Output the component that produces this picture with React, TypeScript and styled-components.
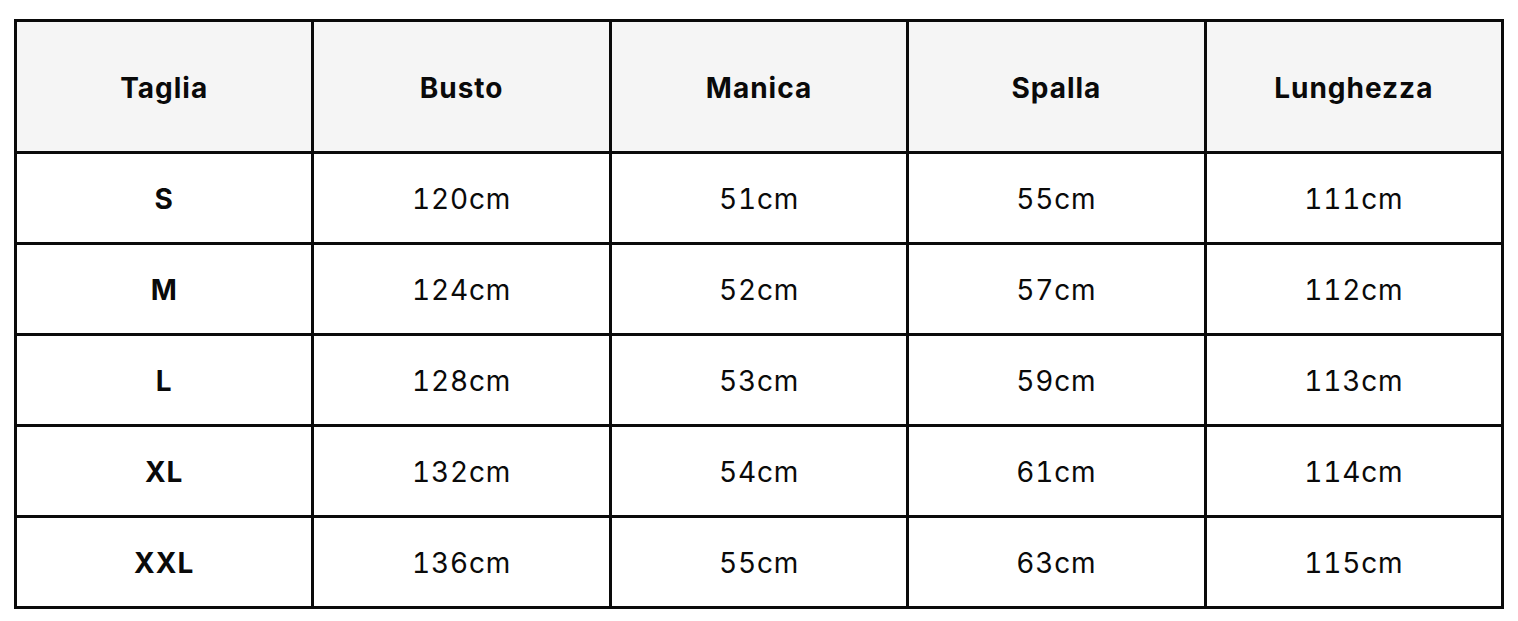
import React from "react";
import styled, { createGlobalStyle } from "styled-components";

const GlobalStyle = createGlobalStyle`
  html, body {
    margin: 0;
    padding: 0;
    background: #ffffff;
  }
  body {
    font-family: Inter, "Open Sans", "Liberation Sans", sans-serif;
  }
`;

const Page = styled.div`
  padding: 19px 15px 0 14px;
`;

const Grid = styled.div`
  width: 1490px;
  display: grid;
  grid-template-columns: repeat(5, 1fr);
  grid-template-rows: 129px repeat(5, 88px);
  gap: 3px;
  padding: 3px;
  box-sizing: border-box;
  background: #0a0a0a;
`;

const Cell = styled.div<{ $head?: boolean; $bold?: boolean }>`
  display: flex;
  align-items: center;
  justify-content: center;
  padding-top: 2px;
  background: ${(p) => (p.$head ? "#f5f5f5" : "#ffffff")};
  color: #0a0a0a;
  font-size: 28px;
  font-variant-numeric: tabular-nums;
  letter-spacing: ${(p) => (p.$head || p.$bold ? "1px" : "0.8px")};
  font-weight: ${(p) => (p.$head || p.$bold ? 700 : 400)};
`;

const HEADERS = ["Taglia", "Busto", "Manica", "Spalla", "Lunghezza"];

const ROWS = [
  ["S", "120cm", "51cm", "55cm", "111cm"],
  ["M", "124cm", "52cm", "57cm", "112cm"],
  ["L", "128cm", "53cm", "59cm", "113cm"],
  ["XL", "132cm", "54cm", "61cm", "114cm"],
  ["XXL", "136cm", "55cm", "63cm", "115cm"],
];

export default function App() {
  return (
    <>
      <GlobalStyle />
      <Page>
        <Grid>
          {HEADERS.map((h) => (
            <Cell key={h} $head>
              {h}
            </Cell>
          ))}
          {ROWS.map((row) =>
            row.map((v, i) => (
              <Cell key={row[0] + i} $bold={i === 0}>
                {v}
              </Cell>
            ))
          )}
        </Grid>
      </Page>
    </>
  );
}
